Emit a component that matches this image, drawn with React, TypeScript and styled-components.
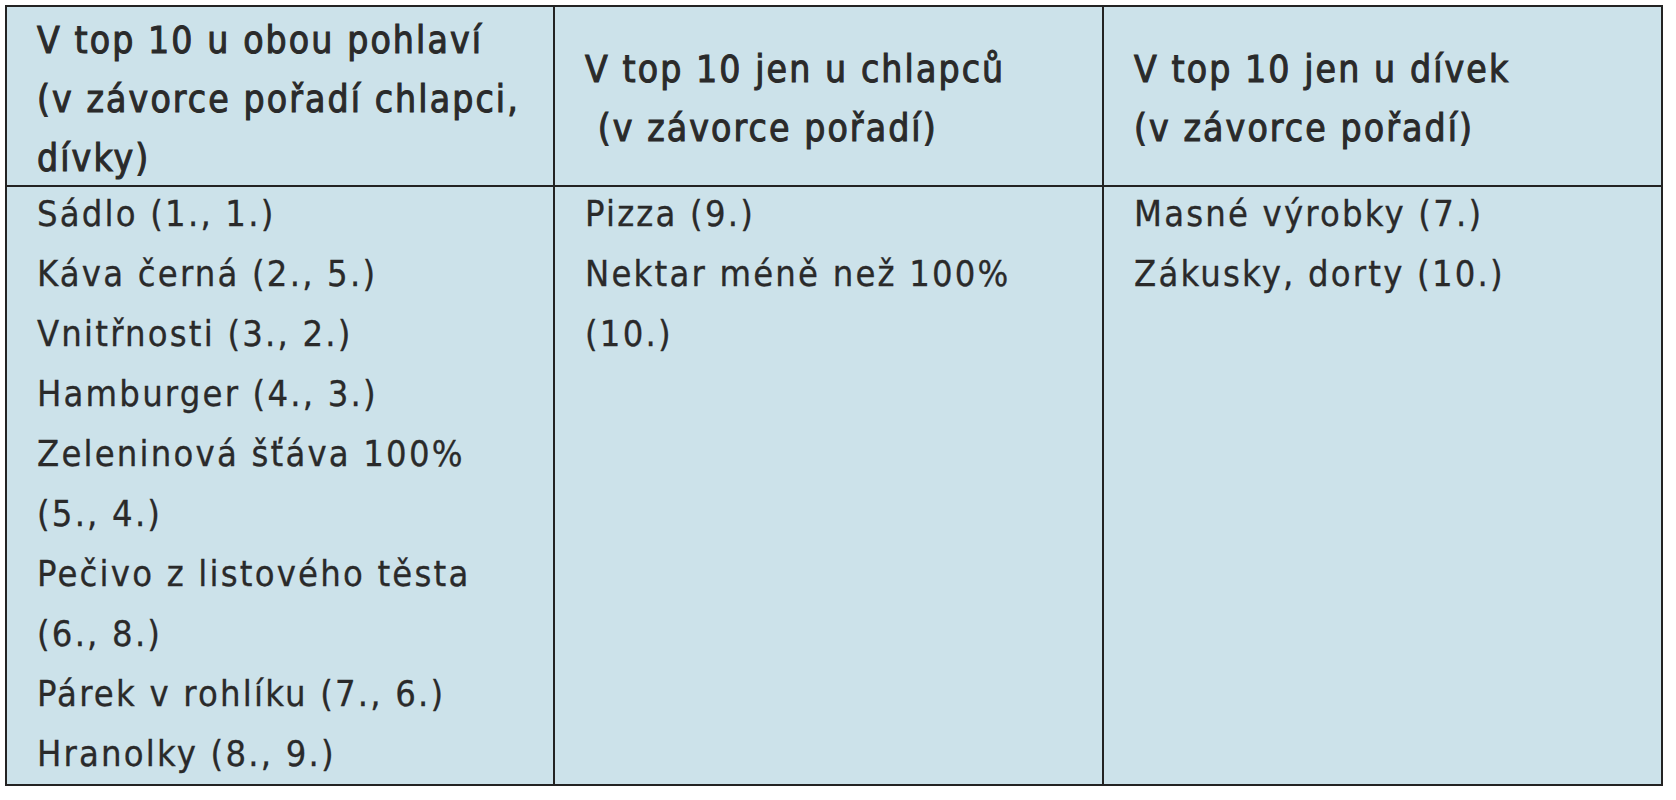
import React from "react";
import styled, { createGlobalStyle } from "styled-components";

const Global = createGlobalStyle`
  html, body { margin: 0; padding: 0; background: #ffffff; }
  body { padding: 5px 0 0 5px; }
`;

const Table = styled.div`
  display: grid;
  grid-template-columns: 548px 549px 557px;
  grid-template-rows: 180px 597px;
  width: 1658px;
  box-sizing: border-box;
  border: 2px solid #232323;
  background: #cce2ea;
  font-family: "DejaVu Sans Condensed", "DejaVu Sans", sans-serif;
  color: #2a2a2a;
`;

const HeadCell = styled.div<{ $last?: boolean }>`
  display: flex;
  flex-direction: column;
  justify-content: center;
  padding: 6px 4px 0 30px;
  border-right: ${(p) => (p.$last ? "none" : "2px solid #232323")};
  border-bottom: 2px solid #232323;
  font-size: 37px;
  line-height: 59px;
  letter-spacing: 2.1px;
  -webkit-text-stroke: 1px #2a2a2a;
`;

const BodyCell = styled.div<{ $last?: boolean }>`
  display: flex;
  flex-direction: column;
  gap: 12px;
  padding: 3px 4px 0 30px;
  border-right: ${(p) => (p.$last ? "none" : "2px solid #232323")};
  font-size: 36px;
  line-height: 48px;
  letter-spacing: 2.2px;
  -webkit-text-stroke: 0.3px #2a2a2a;
`;

const Line = styled.div`
  white-space: pre;
`;

const headers: string[][] = [
  ["V top 10 u obou pohlaví", "(v závorce pořadí chlapci,", "dívky)"],
  ["V top 10 jen u chlapců", " (v závorce pořadí)"],
  ["V top 10 jen u dívek", "(v závorce pořadí)"],
];

const bodies: string[][] = [
  [
    "Sádlo (1., 1.)",
    "Káva černá (2., 5.)",
    "Vnitřnosti (3., 2.)",
    "Hamburger (4., 3.)",
    "Zeleninová šťáva 100%",
    "(5., 4.)",
    "Pečivo z listového těsta",
    "(6., 8.)",
    "Párek v rohlíku (7., 6.)",
    "Hranolky (8., 9.)",
  ],
  ["Pizza (9.)", "Nektar méně než 100%", "(10.)"],
  ["Masné výrobky (7.)", "Zákusky, dorty (10.)"],
];

export default function App() {
  return (
    <>
      <Global />
      <Table>
        {headers.map((lines, i) => (
          <HeadCell key={i} $last={i === 2}>
            {lines.map((l, j) => (
              <Line key={j}>{l}</Line>
            ))}
          </HeadCell>
        ))}
        {bodies.map((lines, i) => (
          <BodyCell key={i} $last={i === 2}>
            {lines.map((l, j) => (
              <Line key={j}>{l}</Line>
            ))}
          </BodyCell>
        ))}
      </Table>
    </>
  );
}
